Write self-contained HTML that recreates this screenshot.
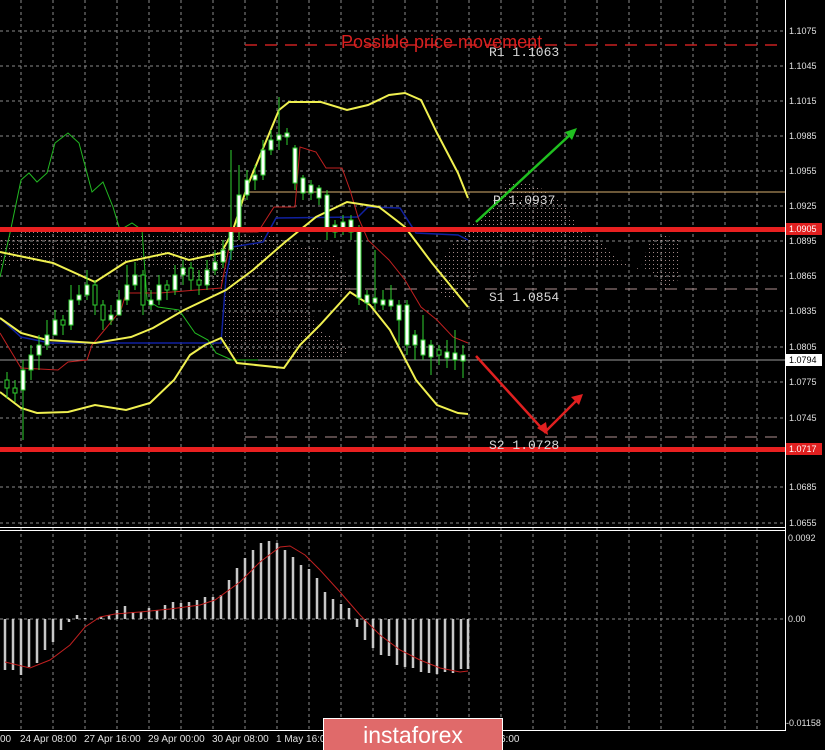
<!DOCTYPE html><html><head><meta charset="utf-8"><style>
body{margin:0;background:#000;width:825px;height:750px;overflow:hidden;font-family:"Liberation Sans",sans-serif}
</style></head><body>
<svg width="825" height="750" xmlns="http://www.w3.org/2000/svg" style="position:absolute;left:0;top:0">
<defs>
<pattern id="h" width="4" height="4" patternUnits="userSpaceOnUse"><rect x="1" y="0" width="1" height="1" fill="#c0a0a0"/></pattern>
</defs>
<rect width="825" height="750" fill="#000"/>
<g stroke="#8a8a8a" stroke-width="1" stroke-dasharray="3,3">
<line x1="21" y1="0" x2="21" y2="730"/><line x1="53" y1="0" x2="53" y2="730"/><line x1="85" y1="0" x2="85" y2="730"/><line x1="117" y1="0" x2="117" y2="730"/><line x1="149" y1="0" x2="149" y2="730"/><line x1="181" y1="0" x2="181" y2="730"/><line x1="213" y1="0" x2="213" y2="730"/><line x1="245" y1="0" x2="245" y2="730"/><line x1="277" y1="0" x2="277" y2="730"/><line x1="309" y1="0" x2="309" y2="730"/><line x1="341" y1="0" x2="341" y2="730"/><line x1="373" y1="0" x2="373" y2="730"/><line x1="405" y1="0" x2="405" y2="730"/><line x1="437" y1="0" x2="437" y2="730"/><line x1="469" y1="0" x2="469" y2="730"/><line x1="501" y1="0" x2="501" y2="730"/><line x1="533" y1="0" x2="533" y2="730"/><line x1="565" y1="0" x2="565" y2="730"/><line x1="597" y1="0" x2="597" y2="730"/><line x1="629" y1="0" x2="629" y2="730"/><line x1="661" y1="0" x2="661" y2="730"/><line x1="693" y1="0" x2="693" y2="730"/><line x1="725" y1="0" x2="725" y2="730"/><line x1="757" y1="0" x2="757" y2="730"/>
<line x1="0" y1="31" x2="785" y2="31"/><line x1="0" y1="66" x2="785" y2="66"/><line x1="0" y1="101" x2="785" y2="101"/><line x1="0" y1="136" x2="785" y2="136"/><line x1="0" y1="171" x2="785" y2="171"/><line x1="0" y1="206" x2="785" y2="206"/><line x1="0" y1="241" x2="785" y2="241"/><line x1="0" y1="276" x2="785" y2="276"/><line x1="0" y1="311" x2="785" y2="311"/><line x1="0" y1="347" x2="785" y2="347"/><line x1="0" y1="382" x2="785" y2="382"/><line x1="0" y1="418" x2="785" y2="418"/><line x1="0" y1="487" x2="785" y2="487"/><line x1="0" y1="523" x2="785" y2="523"/><line x1="0" y1="619" x2="785" y2="619"/>
</g>
<!-- clouds -->
<g opacity="0.85">
<path d="M0 240 L20 232 L130 232 L150 236 L175 232 L270 234 L300 245 L330 250 L345 270 L350 290 L330 300 L300 305 L250 300 L220 290 L190 275 L150 265 L100 262 L60 260 L20 262 L0 268Z" fill="url(#h)"/>
<path d="M225 290 L260 283 L290 287 L305 300 L320 330 L345 345 L350 355 L320 360 L280 360 L250 358 L225 350Z" fill="url(#h)"/>
<path d="M440 260 L460 235 L490 205 L505 185 L520 180 L545 190 L565 205 L580 230 L600 240 L620 260 L640 270 L650 240 L665 235 L678 240 L678 280 L665 290 L650 270 L630 265 L600 268 L480 268 L470 288 L450 300 L440 295Z" fill="url(#h)"/>
</g>
<!-- levels -->
<line x1="245" y1="45" x2="785" y2="45" stroke="#c82020" stroke-width="1.5" stroke-dasharray="12,8"/>
<line x1="245" y1="192" x2="785" y2="192" stroke="#d8b070" stroke-width="1"/>
<line x1="245" y1="289" x2="785" y2="289" stroke="#b09090" stroke-width="1" stroke-dasharray="12,8"/>
<line x1="245" y1="437" x2="785" y2="437" stroke="#b09090" stroke-width="1" stroke-dasharray="12,8"/>
<line x1="0" y1="360" x2="785" y2="360" stroke="#9a9a9a" stroke-width="1"/>
<!-- indicator lines -->
<polyline fill="none" stroke="#22b822" stroke-width="1" points="0,277 10,233 21,180 29,173 37,182 47,173 55,143 68,133 79,143 92,192 103,182 113,207 120,230 132,223 142,230 147,300 158,307 179,310 195,333 208,340 216,353 232,360 258,360"/>
<polyline fill="none" stroke="#1020a0" stroke-width="1.5" points="0,318 21,337 50,343 121,343 221,343 226,277 232,247 263,242 276,218 358,217 368,207 400,208 416,233 458,235 468,240"/>
<polyline fill="none" stroke="#c02020" stroke-width="1" points="0,333 21,368 58,370 68,362 87,360 92,345 121,310 126,293 160,293 221,288 232,232 258,232 274,207 295,207 300,147 316,152 326,168 342,168 350,190 358,217 368,240 389,260 405,280 421,307 437,320 453,337 468,343"/>
<g fill="none" stroke="#f0f050" stroke-width="2">
<polyline points="0,252 53,263 95,282 126,262 168,253 189,260 221,253 232,233 247,187 279,110 289,102 321,102 347,110 368,105 389,95 405,93 421,100 437,133 458,173 468,198"/>
<polyline points="0,318 21,333 47,340 95,343 131,337 153,328 184,310 226,290 253,270 284,243 316,217 347,202 379,207 405,227 432,263 468,307"/>
<polyline points="0,392 21,408 37,413 68,412 95,405 126,410 150,403 174,380 190,355 205,345 221,338 237,363 284,368 300,345 320,325 350,292 370,305 390,330 416,380 437,405 458,413 468,414"/>
</g>
<!-- candles -->
<g stroke="#30d030" stroke-width="1">
<line x1="7" y1="372" x2="7" y2="398"/><rect x="5" y="380" width="4" height="8" fill="#000"/>
<line x1="15" y1="380" x2="15" y2="402"/><rect x="13" y="388" width="4" height="5" fill="#000"/>
<line x1="23" y1="360" x2="23" y2="440"/><rect x="21" y="370" width="4" height="20" fill="#fff"/>
<line x1="31" y1="345" x2="31" y2="380"/><rect x="29" y="355" width="4" height="15" fill="#fff"/>
<line x1="39" y1="335" x2="39" y2="370"/><rect x="37" y="345" width="4" height="10" fill="#fff"/>
<line x1="47" y1="320" x2="47" y2="350"/><rect x="45" y="335" width="4" height="10" fill="#fff"/>
<line x1="55" y1="310" x2="55" y2="335"/><rect x="53" y="320" width="4" height="15" fill="#fff"/>
<line x1="63" y1="315" x2="63" y2="335"/><rect x="61" y="320" width="4" height="5" fill="#000"/>
<line x1="71" y1="285" x2="71" y2="330"/><rect x="69" y="300" width="4" height="25" fill="#fff"/>
<line x1="79" y1="285" x2="79" y2="305"/><rect x="77" y="295" width="4" height="5" fill="#fff"/>
<line x1="87" y1="270" x2="87" y2="300"/><rect x="85" y="285" width="4" height="10" fill="#fff"/>
<line x1="95" y1="280" x2="95" y2="315"/><rect x="93" y="285" width="4" height="20" fill="#000"/>
<line x1="103" y1="300" x2="103" y2="330"/><rect x="101" y="305" width="4" height="15" fill="#000"/>
<line x1="111" y1="305" x2="111" y2="325"/><rect x="109" y="315" width="4" height="5" fill="#fff"/>
<line x1="119" y1="290" x2="119" y2="315"/><rect x="117" y="300" width="4" height="15" fill="#fff"/>
<line x1="127" y1="265" x2="127" y2="305"/><rect x="125" y="285" width="4" height="15" fill="#fff"/>
<line x1="135" y1="262" x2="135" y2="290"/><rect x="133" y="275" width="4" height="10" fill="#fff"/>
<line x1="143" y1="270" x2="143" y2="315"/><rect x="141" y="275" width="4" height="30" fill="#000"/>
<line x1="151" y1="290" x2="151" y2="310"/><rect x="149" y="300" width="4" height="5" fill="#fff"/>
<line x1="159" y1="275" x2="159" y2="305"/><rect x="157" y="285" width="4" height="15" fill="#fff"/>
<line x1="167" y1="280" x2="167" y2="300"/><rect x="165" y="285" width="4" height="5" fill="#000"/>
<line x1="175" y1="265" x2="175" y2="295"/><rect x="173" y="275" width="4" height="15" fill="#fff"/>
<line x1="183" y1="260" x2="183" y2="285"/><rect x="181" y="268" width="4" height="7" fill="#fff"/>
<line x1="191" y1="262" x2="191" y2="290"/><rect x="189" y="268" width="4" height="12" fill="#000"/>
<line x1="199" y1="270" x2="199" y2="295"/><rect x="197" y="280" width="4" height="5" fill="#000"/>
<line x1="207" y1="260" x2="207" y2="290"/><rect x="205" y="270" width="4" height="15" fill="#fff"/>
<line x1="215" y1="250" x2="215" y2="275"/><rect x="213" y="262" width="4" height="8" fill="#fff"/>
<line x1="223" y1="240" x2="223" y2="268"/><rect x="221" y="250" width="4" height="12" fill="#fff"/>
<line x1="231" y1="150" x2="231" y2="260"/><rect x="229" y="230" width="4" height="20" fill="#fff"/>
<line x1="239" y1="165" x2="239" y2="240"/><rect x="237" y="195" width="4" height="35" fill="#fff"/>
<line x1="247" y1="170" x2="247" y2="200"/><rect x="245" y="180" width="4" height="15" fill="#fff"/>
<line x1="255" y1="165" x2="255" y2="190"/><rect x="253" y="175" width="4" height="5" fill="#fff"/>
<line x1="263" y1="140" x2="263" y2="180"/><rect x="261" y="150" width="4" height="25" fill="#fff"/>
<line x1="271" y1="130" x2="271" y2="155"/><rect x="269" y="140" width="4" height="10" fill="#fff"/>
<line x1="279" y1="97" x2="279" y2="150"/><rect x="277" y="135" width="4" height="5" fill="#fff"/>
<line x1="287" y1="128" x2="287" y2="145"/><rect x="285" y="133" width="4" height="4" fill="#fff"/>
<line x1="295" y1="145" x2="295" y2="190"/><rect x="293" y="148" width="4" height="35" fill="#fff"/>
<line x1="303" y1="175" x2="303" y2="200"/><rect x="301" y="178" width="4" height="15" fill="#fff"/>
<line x1="311" y1="180" x2="311" y2="200"/><rect x="309" y="185" width="4" height="8" fill="#fff"/>
<line x1="319" y1="185" x2="319" y2="205"/><rect x="317" y="188" width="4" height="10" fill="#fff"/>
<line x1="327" y1="190" x2="327" y2="240"/><rect x="325" y="195" width="4" height="35" fill="#fff"/>
<line x1="335" y1="220" x2="335" y2="238"/><rect x="333" y="225" width="4" height="7" fill="#fff"/>
<line x1="343" y1="215" x2="343" y2="235"/><rect x="341" y="222" width="4" height="6" fill="#fff"/>
<line x1="351" y1="215" x2="351" y2="240"/><rect x="349" y="220" width="4" height="12" fill="#fff"/>
<line x1="359" y1="225" x2="359" y2="305"/><rect x="357" y="228" width="4" height="70" fill="#fff"/>
<line x1="367" y1="290" x2="367" y2="310"/><rect x="365" y="295" width="4" height="8" fill="#fff"/>
<line x1="375" y1="250" x2="375" y2="310"/><rect x="373" y="298" width="4" height="5" fill="#fff"/>
<line x1="383" y1="290" x2="383" y2="310"/><rect x="381" y="300" width="4" height="5" fill="#fff"/>
<line x1="391" y1="285" x2="391" y2="310"/><rect x="389" y="300" width="4" height="6" fill="#fff"/>
<line x1="399" y1="300" x2="399" y2="345"/><rect x="397" y="305" width="4" height="15" fill="#fff"/>
<line x1="407" y1="300" x2="407" y2="355"/><rect x="405" y="305" width="4" height="40" fill="#fff"/>
<line x1="415" y1="330" x2="415" y2="360"/><rect x="413" y="335" width="4" height="10" fill="#fff"/>
<line x1="423" y1="315" x2="423" y2="360"/><rect x="421" y="340" width="4" height="15" fill="#fff"/>
<line x1="431" y1="340" x2="431" y2="375"/><rect x="429" y="345" width="4" height="12" fill="#fff"/>
<line x1="439" y1="345" x2="439" y2="365"/><rect x="437" y="350" width="4" height="5" fill="#000"/>
<line x1="447" y1="340" x2="447" y2="368"/><rect x="445" y="352" width="4" height="6" fill="#fff"/>
<line x1="455" y1="330" x2="455" y2="370"/><rect x="453" y="353" width="4" height="7" fill="#fff"/>
<line x1="463" y1="345" x2="463" y2="378"/><rect x="461" y="355" width="4" height="6" fill="#fff"/>
</g>
<!-- red S/R lines -->
<rect x="0" y="227" width="785" height="5" fill="#e82020"/>
<rect x="0" y="447" width="785" height="5" fill="#e82020"/>
<!-- arrows -->
<g stroke="#20c020" stroke-width="2.5" fill="none"><line x1="476" y1="222" x2="572" y2="133"/></g>
<polygon points="577,128 565,132 572,140" fill="#20c020"/>
<g stroke="#e02020" stroke-width="2.5" fill="none"><polyline points="476,356 545,432 579,398"/></g>
<polygon points="548,435 537,428 546,422" fill="#e02020"/>
<polygon points="583,394 571,397 579,405" fill="#e02020"/>
<!-- text -->
<text x="341" y="48" fill="#d82020" font-size="18">Possible price movement</text>
<g fill="#d8d8d8" font-family="Liberation Mono,monospace" font-size="13">
<text x="489" y="56">R1 1.1063</text>
<text x="493" y="204">P 1.0937</text>
<text x="489" y="301">S1 1.0854</text>
<text x="489" y="449">S2 1.0728</text>
</g>
<!-- panel borders -->
<line x1="785.5" y1="0" x2="785.5" y2="731" stroke="#fff"/>
<line x1="0" y1="527.5" x2="786" y2="527.5" stroke="#fff"/>
<line x1="0" y1="530.5" x2="786" y2="530.5" stroke="#fff"/>
<line x1="0" y1="730.5" x2="786" y2="730.5" stroke="#fff"/>
<!-- MACD -->
<g stroke="#c8c8c8" stroke-width="2.5">
<line x1="5" y1="619" x2="5" y2="670"/><line x1="13" y1="619" x2="13" y2="670"/><line x1="21" y1="619" x2="21" y2="675"/><line x1="29" y1="619" x2="29" y2="667"/><line x1="37" y1="619" x2="37" y2="663"/><line x1="45" y1="619" x2="45" y2="650"/><line x1="53" y1="619" x2="53" y2="642"/><line x1="61" y1="619" x2="61" y2="630"/><line x1="69" y1="619" x2="69" y2="622"/><line x1="77" y1="619" x2="77" y2="615"/><line x1="85" y1="619" x2="85" y2="618"/><line x1="101" y1="619" x2="101" y2="617"/><line x1="109" y1="619" x2="109" y2="615"/><line x1="117" y1="619" x2="117" y2="610"/><line x1="125" y1="619" x2="125" y2="606"/><line x1="133" y1="619" x2="133" y2="612"/><line x1="141" y1="619" x2="141" y2="612"/><line x1="149" y1="619" x2="149" y2="608"/><line x1="157" y1="619" x2="157" y2="610"/><line x1="165" y1="619" x2="165" y2="605"/><line x1="173" y1="619" x2="173" y2="602"/><line x1="181" y1="619" x2="181" y2="603"/><line x1="189" y1="619" x2="189" y2="602"/><line x1="197" y1="619" x2="197" y2="600"/><line x1="205" y1="619" x2="205" y2="597"/><line x1="213" y1="619" x2="213" y2="597"/><line x1="221" y1="619" x2="221" y2="595"/><line x1="229" y1="619" x2="229" y2="580"/><line x1="237" y1="619" x2="237" y2="568"/><line x1="245" y1="619" x2="245" y2="558"/><line x1="253" y1="619" x2="253" y2="550"/><line x1="261" y1="619" x2="261" y2="543"/><line x1="269" y1="619" x2="269" y2="541"/><line x1="277" y1="619" x2="277" y2="543"/><line x1="285" y1="619" x2="285" y2="550"/><line x1="293" y1="619" x2="293" y2="557"/><line x1="301" y1="619" x2="301" y2="565"/><line x1="309" y1="619" x2="309" y2="569"/><line x1="317" y1="619" x2="317" y2="578"/><line x1="325" y1="619" x2="325" y2="592"/><line x1="333" y1="619" x2="333" y2="599"/><line x1="341" y1="619" x2="341" y2="604"/><line x1="349" y1="619" x2="349" y2="608"/><line x1="357" y1="619" x2="357" y2="627"/><line x1="365" y1="619" x2="365" y2="640"/><line x1="373" y1="619" x2="373" y2="648"/><line x1="381" y1="619" x2="381" y2="655"/><line x1="389" y1="619" x2="389" y2="656"/><line x1="397" y1="619" x2="397" y2="665"/><line x1="405" y1="619" x2="405" y2="667"/><line x1="413" y1="619" x2="413" y2="668"/><line x1="421" y1="619" x2="421" y2="672"/><line x1="429" y1="619" x2="429" y2="673"/><line x1="437" y1="619" x2="437" y2="674"/><line x1="445" y1="619" x2="445" y2="672"/><line x1="453" y1="619" x2="453" y2="673"/><line x1="461" y1="619" x2="461" y2="669"/><line x1="468" y1="619" x2="468" y2="669"/>
</g>
<polyline fill="none" stroke="#c02020" stroke-width="1" points="5,662 30,668 50,660 70,645 85,627 100,617 115,614 140,612 170,609 200,605 215,600 240,582 260,562 280,547 290,546 305,555 320,570 340,592 360,615 380,635 400,650 420,660 440,668 460,672 468,671"/>
<!-- right axis labels -->
<g fill="#e0e0e0" font-size="9">
<text x="789" y="34">1.1075</text><text x="789" y="69">1.1045</text><text x="789" y="104">1.1015</text><text x="789" y="139">1.0985</text><text x="789" y="174">1.0955</text><text x="789" y="209">1.0925</text><text x="789" y="244">1.0895</text><text x="789" y="279">1.0865</text><text x="789" y="314">1.0835</text><text x="789" y="350">1.0805</text><text x="789" y="385">1.0775</text><text x="789" y="421">1.0745</text><text x="789" y="490">1.0685</text><text x="789" y="526">1.0655</text>
<text x="788" y="541">0.0092</text><text x="788" y="622">0.00</text><text x="786" y="726">-0.01158</text>
</g>
<rect x="786" y="223" width="36" height="12" fill="#e02020"/><text x="789" y="232" fill="#fff" font-size="9">1.0905</text>
<rect x="786" y="354" width="36" height="12" fill="#fff"/><text x="789" y="363" fill="#000" font-size="9">1.0794</text>
<rect x="786" y="443" width="36" height="12" fill="#e02020"/><text x="789" y="452" fill="#fff" font-size="9">1.0717</text>
<!-- time labels -->
<g fill="#e0e0e0" font-size="10">
<text x="0" y="742">00</text><text x="20" y="742">24 Apr 08:00</text><text x="84" y="742">27 Apr 16:00</text><text x="148" y="742">29 Apr 00:00</text><text x="212" y="742">30 Apr 08:00</text><text x="276" y="742">1 May 16:00</text><text x="500" y="742">6:00</text>
</g>
<!-- logo -->
<rect x="323.5" y="718.5" width="179" height="33" fill="#e06a6a" stroke="#fff"/>
<text x="413" y="743" fill="#fff" font-size="23" text-anchor="middle">instaforex</text>
</svg>
</body></html>
